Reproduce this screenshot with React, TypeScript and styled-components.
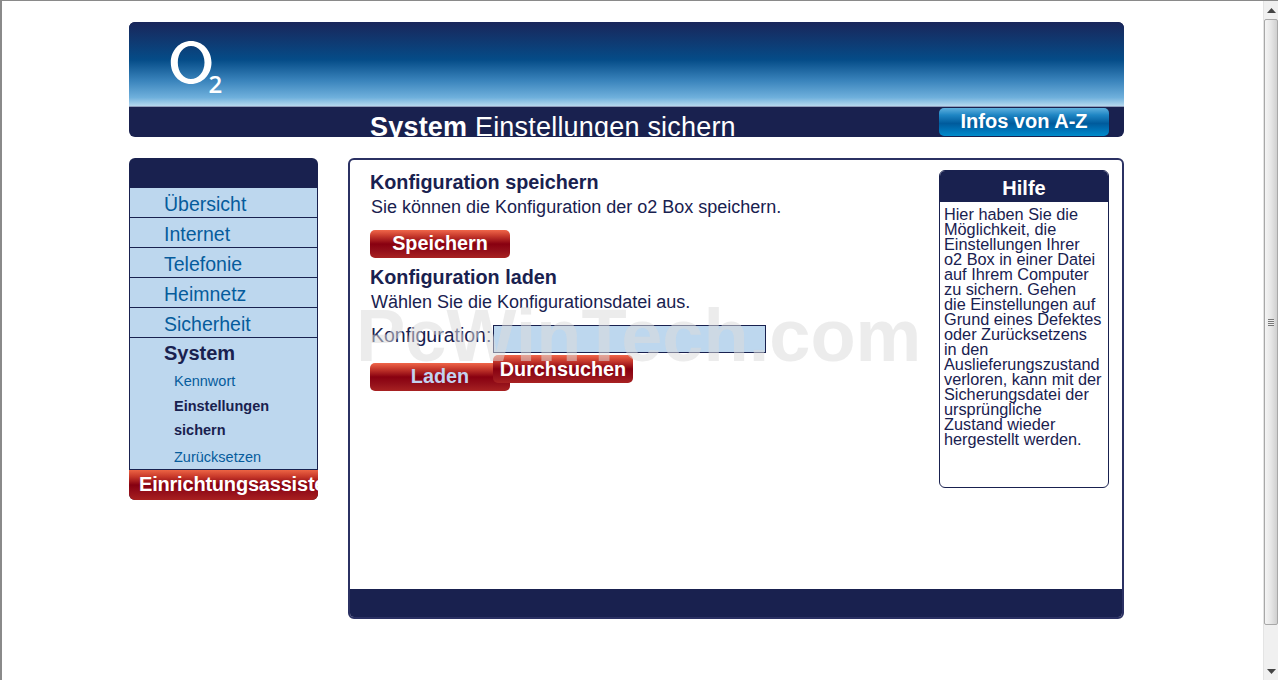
import React from 'react';
import styled, { createGlobalStyle } from 'styled-components';

const navy = '#19214f';
const sky = '#bdd7ee';
const link = '#065c9c';

const GlobalStyle = createGlobalStyle`
  html, body {
    margin: 0;
    height: 100%;
    overflow: hidden;
    background: #fff;
  }
  body {
    font-family: "Liberation Sans", Arial, sans-serif;
  }
`;

const Window = styled.div`
  display: flex;
  width: 1278px;
  height: 680px;
  box-sizing: border-box;
  border-top: 1px solid #8a8a8a;
  border-left: 2px solid #8a8a8a;
`;

const Page = styled.div`
  flex: 1;
  position: relative;
  padding: 21px 0 0 127px;
`;

const Scrollbar = styled.div`
  width: 15px;
  display: flex;
  flex-direction: column;
  align-items: center;
  justify-content: space-between;
  background: #f0f0f0;
  border-left: 1px solid #e4e4e4;
  box-sizing: border-box;
`;

const ArrowButton = styled.div`
  height: 18px;
  display: flex;
  align-items: center;
  justify-content: center;
`;

const Thumb = styled.div`
  width: 14px;
  height: 606px;
  box-sizing: border-box;
  border: 1px solid #a8a8a8;
  border-radius: 2px;
  background: linear-gradient(to right, #f4f4f4, #e6e6e6 50%, #cfcfcf);
  display: flex;
  align-items: center;
  justify-content: center;
`;

const Grip = styled.div`
  width: 6px;
  height: 7px;
  background: repeating-linear-gradient(to bottom, #777 0 1px, #eee 1px 2px);
`;

const TrackEnd = styled.div`
  flex: 1;
`;

const Header = styled.header`
  width: 995px;
  height: 115px;
  border-radius: 6px;
  overflow: hidden;
  background: ${navy};
`;

const Sky = styled.div`
  height: 85px;
  padding: 18px 0 0 41px;
  box-sizing: border-box;
  border-bottom: 1px solid #8f9dbc;
  background: linear-gradient(to bottom, #19265a 0%, #054c88 45%, #3a84bc 70%, #6fb0dc 90%, #b5d8ee 100%);
`;

const Band = styled.div`
  height: 30px;
  display: flex;
  justify-content: space-between;
  padding: 1px 15px 0 241px;
  box-sizing: border-box;
  overflow: hidden;
`;

const PageTitle = styled.h1`
  margin: 3px 0 0;
  font-size: 27px;
  line-height: 32px;
  font-weight: normal;
  letter-spacing: 0.2px;
  color: #fff;
  white-space: nowrap;

  strong {
    font-weight: bold;
  }
`;

const InfoButton = styled.div`
  width: 170px;
  height: 28px;
  border-radius: 5px;
  text-align: center;
  font-size: 20px;
  line-height: 26px;
  font-weight: bold;
  color: #fff;
  background: linear-gradient(to bottom, #5fb0de 0%, #1f86c4 25%, #005b9c 55%, #0074b8 80%, #008ccc 100%);
`;

const Columns = styled.div`
  display: flex;
  align-items: flex-start;
  gap: 30px;
  margin-top: 21px;
`;

const Sidebar = styled.nav`
  width: 189px;
  border-radius: 6px;
  overflow: hidden;
  background: ${navy};
  padding-top: 30px;
`;

const NavList = styled.div`
  margin: 0 1px;
  background: ${sky};
`;

const NavItem = styled.div<{ $active?: boolean; $last?: boolean }>`
  height: 30px;
  box-sizing: border-box;
  padding-left: 34px;
  font-size: ${p => (p.$active ? '20px' : '19.5px')};
  line-height: ${p => (p.$active ? '31px' : '33px')};
  color: ${p => (p.$active ? navy : link)};
  font-weight: ${p => (p.$active ? 'bold' : 'normal')};
  border-bottom: ${p => (p.$last ? '0' : `1px solid ${navy}`)};
`;

const SubList = styled.div`
  padding-left: 44px;
  border-bottom: 1px solid ${navy};
`;

const SubItem = styled.div<{ $active?: boolean }>`
  width: 110px;
  font-size: 14.5px;
  line-height: 24px;
  padding: ${p => (p.$active ? '0' : '1px 0')};
  color: ${p => (p.$active ? navy : link)};
  font-weight: ${p => (p.$active ? 'bold' : 'normal')};

  &:last-child {
    padding: 3px 0 0;
  }
`;

const Wizard = styled.div`
  height: 30px;
  margin-right: -1px;
  padding-left: 10px;
  font-size: 20px;
  line-height: 29px;
  font-weight: bold;
  letter-spacing: -0.2px;
  color: #fff;
  white-space: nowrap;
  overflow: hidden;
  background: linear-gradient(to bottom, #ec6444 0%, #c8392a 22%, #850010 50%, #96101a 75%, #a82020 100%);
`;

const Main = styled.main`
  width: 776px;
  height: 461px;
  box-sizing: border-box;
  border: 2px solid #2b3163;
  border-radius: 6px;
  display: flex;
  flex-direction: column;
  overflow: hidden;
`;

const MainBody = styled.div`
  flex: 1;
  display: flex;
  justify-content: space-between;
  padding: 10px 13px 0 20px;
`;

const FormColumn = styled.div`
  width: 500px;
`;

const MainFooter = styled.div`
  height: 28px;
  background: ${navy};
`;

const SectionTitle = styled.h2`
  margin: 0;
  font-size: 19.8px;
  line-height: 24px;
  font-weight: bold;
  color: ${navy};
`;

const Paragraph = styled.p`
  margin: 1px 0 0 1px;
  font-size: 18px;
  line-height: 24px;
  color: ${navy};
  white-space: nowrap;
`;

const RedButton = styled.div<{ $muted?: boolean }>`
  position: relative;
  width: 140px;
  height: 28px;
  border-radius: 5px;
  text-align: center;
  font-size: 19.8px;
  line-height: 26px;
  font-weight: bold;
  color: ${p => (p.$muted ? '#c3d2f0' : '#fff')};
  z-index: ${p => (p.$muted ? 0 : 1)};
  background: linear-gradient(to bottom, #f0664a 0%, #c93c2e 20%, #880010 50%, #94101a 75%, #a82222 100%);
`;

const SaveButton = styled(RedButton)`
  margin: 11px 0 7px;
`;

const BrowseButton = styled(RedButton)`
  line-height: 28px;
`;

const LoadRow = styled.div`
  display: flex;
  margin-top: 11px;
`;

const FieldLabel = styled.label`
  width: 123px;
  padding-left: 1px;
  box-sizing: border-box;
  font-size: 19.5px;
  line-height: 20px;
  color: ${navy};
  white-space: nowrap;
`;

const FieldStack = styled.div`
  display: flex;
  flex-direction: column;
  gap: 2px;
`;

const FileInput = styled.div`
  width: 273px;
  height: 28px;
  box-sizing: border-box;
  background: ${sky};
  border: 1px solid ${navy};
`;

const LoadButton = styled(RedButton)`
  margin-top: -20px;
`;

const HelpBox = styled.aside`
  width: 170px;
  height: 318px;
  box-sizing: border-box;
  border: 1px solid ${navy};
  border-radius: 6px;
  overflow: hidden;
`;

const HelpTitle = styled.div`
  height: 31px;
  text-align: center;
  font-size: 20px;
  line-height: 35px;
  font-weight: bold;
  color: #fff;
  background: ${navy};
`;

const HelpText = styled.div`
  padding: 5px 4px 0;
  font-size: 16.3px;
  line-height: 15px;
  color: ${navy};
`;

const Watermark = styled.div`
  position: absolute;
  left: 354px;
  top: 295px;
  font-size: 74px;
  line-height: 80px;
  font-weight: bold;
  color: rgba(219, 219, 219, 0.53);
  white-space: nowrap;
  pointer-events: none;
  z-index: 2;
`;

const O2Logo = () => (
  <svg width="54" height="56" viewBox="0 0 54 56">
    <path
      fillRule="evenodd"
      fill="#fff"
      d="M21 1 C32.5 1 41.5 10.5 41.5 22.5 C41.5 34.5 32.5 44 21 44 C9.5 44 0.8 34.5 0.8 22.5 C0.8 10.5 9.5 1 21 1 Z M21 6 C13.5 6 7.8 13 7.8 22.5 C7.8 32 13.5 39 21 39 C28.5 39 34.5 32 34.5 22.5 C34.5 13 28.5 6 21 6 Z"
    />
    <text x="38.5" y="53" fontFamily='"Open Sans", sans-serif' fontWeight="600" fontSize="24" fill="#fff">
      2
    </text>
  </svg>
);

const helpText =
  'Hier haben Sie die Möglichkeit, die Einstellungen Ihrer o2\u00a0Box in einer Datei auf Ihrem Computer zu sichern. Gehen die\u00a0Einstellungen auf Grund eines Defektes oder Zurücksetzens in den Auslieferungszustand verloren, kann mit der Sicherungsdatei der ursprüngliche Zustand wieder hergestellt werden.';

const topLevel = ['Übersicht', 'Internet', 'Telefonie', 'Heimnetz', 'Sicherheit'];

export default function App() {
  return (
    <Window>
      <GlobalStyle />
      <Page>
        <Header>
          <Sky>
            <O2Logo />
          </Sky>
          <Band>
            <PageTitle>
              <strong>System</strong> Einstellungen sichern
            </PageTitle>
            <InfoButton>Infos von A-Z</InfoButton>
          </Band>
        </Header>
        <Columns>
          <Sidebar>
            <NavList>
              {topLevel.map(item => (
                <NavItem key={item}>{item}</NavItem>
              ))}
              <NavItem $active $last>
                System
              </NavItem>
              <SubList>
                <SubItem>Kennwort</SubItem>
                <SubItem $active>Einstellungen sichern</SubItem>
                <SubItem>Zurücksetzen</SubItem>
              </SubList>
            </NavList>
            <Wizard>Einrichtungsassistent</Wizard>
          </Sidebar>
          <Main>
            <MainBody>
              <FormColumn>
                <SectionTitle>Konfiguration speichern</SectionTitle>
                <Paragraph>Sie können die Konfiguration der o2 Box speichern.</Paragraph>
                <SaveButton>Speichern</SaveButton>
                <SectionTitle>Konfiguration laden</SectionTitle>
                <Paragraph>Wählen Sie die Konfigurationsdatei aus.</Paragraph>
                <LoadRow>
                  <FieldLabel>Konfiguration:</FieldLabel>
                  <FieldStack>
                    <FileInput />
                    <BrowseButton>Durchsuchen</BrowseButton>
                  </FieldStack>
                </LoadRow>
                <LoadButton $muted>Laden</LoadButton>
              </FormColumn>
              <HelpBox>
                <HelpTitle>Hilfe</HelpTitle>
                <HelpText>{helpText}</HelpText>
              </HelpBox>
            </MainBody>
            <MainFooter />
          </Main>
        </Columns>
        <Watermark>PcWinTech.com</Watermark>
      </Page>
      <Scrollbar>
        <ArrowButton>
          <svg width="9" height="5" viewBox="0 0 9 5">
            <path d="M4.5 0 L9 5 L0 5 Z" fill="#444" />
          </svg>
        </ArrowButton>
        <Thumb>
          <Grip />
        </Thumb>
        <TrackEnd />
        <ArrowButton>
          <svg width="9" height="5" viewBox="0 0 9 5">
            <path d="M0 0 L9 0 L4.5 5 Z" fill="#444" />
          </svg>
        </ArrowButton>
      </Scrollbar>
    </Window>
  );
}
